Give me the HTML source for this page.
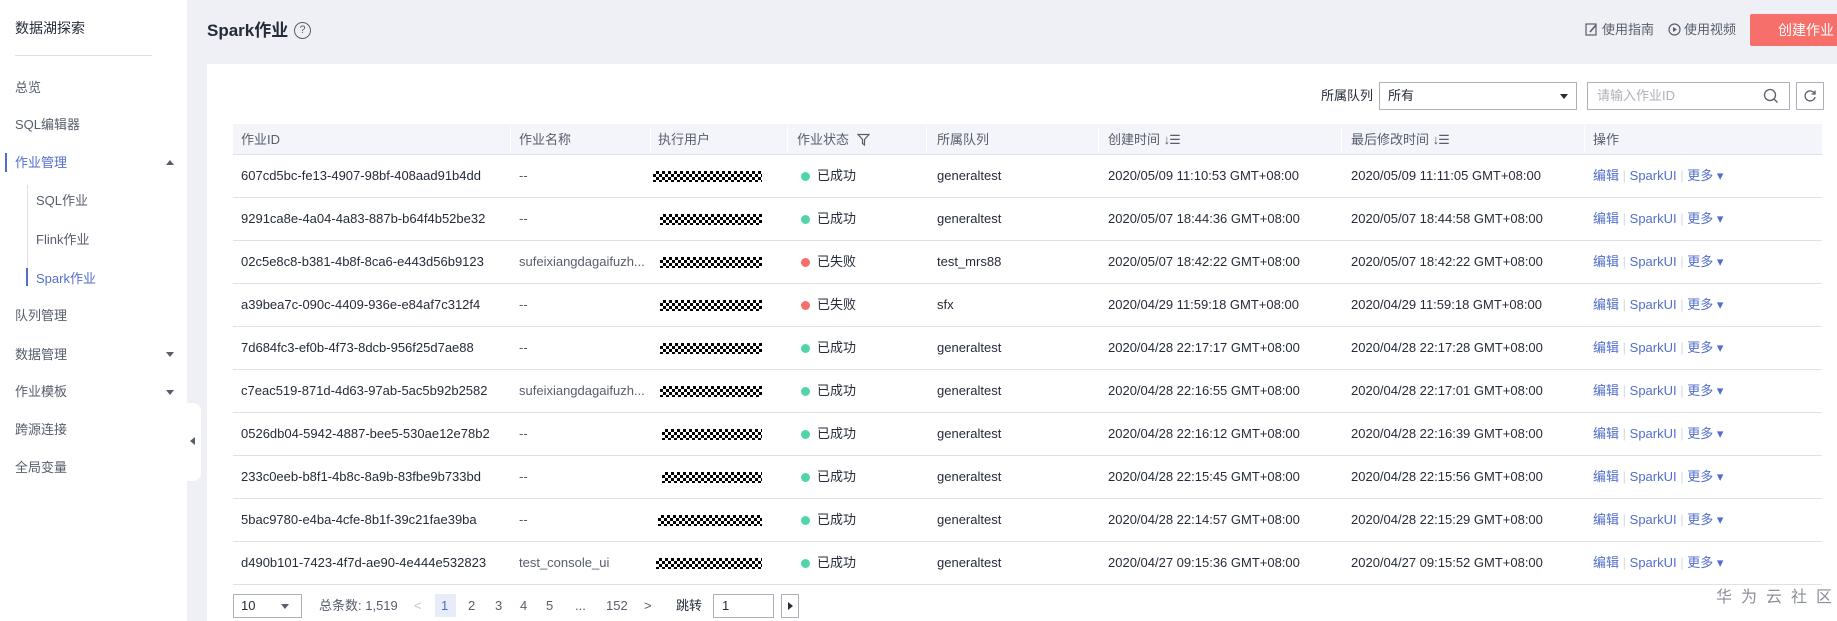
<!DOCTYPE html>
<html><head><meta charset="utf-8"><style>
*{margin:0;padding:0;box-sizing:border-box}
body{width:1837px;height:621px;overflow:hidden;background:#fff;font-family:"Liberation Sans","Noto Sans CJK SC",sans-serif;color:#252b3a;position:relative;line-height:16px}
.a{position:absolute;white-space:nowrap}
.sb{font-size:13px;color:#575d6c}
.tri{width:0;height:0;border-left:4px solid transparent;border-right:4px solid transparent;border-top:5px solid #575d6c}
.triu{width:0;height:0;border-left:4px solid transparent;border-right:4px solid transparent;border-bottom:5px solid #575d6c}
.row{position:absolute;left:233px;width:1589px;height:43px;border-bottom:1px solid #dfe1e6;font-size:13px;color:#252b3a}
.row span{position:absolute;top:13px;white-space:nowrap;line-height:16px}
.chk{position:absolute;top:16px;height:11px;background:repeating-conic-gradient(#000 0 25%,#fff 0 50%) 0 0/6px 6px}
.dot{position:absolute;top:17px;width:9px;height:9px;border-radius:50%}
.lk{color:#526ecc}
.sep{color:#d5d8de}
.th{font-size:13px;color:#575d6c;top:132px}
.pg{font-size:13px;color:#575d6c;top:598px}
</style></head><body>
<div class="a" style="left:15px;top:20px;font-size:14px;color:#252b3a">数据湖探索</div>
<div class="a" style="left:15px;top:55px;width:137px;height:1px;background:#dfe1e6"></div>
<div class="a sb" style="left:15px;top:80px">总览</div>
<div class="a sb" style="left:15px;top:117px">SQL编辑器</div>
<div class="a" style="left:5px;top:153px;width:2px;height:19px;background:#526ecc"></div>
<div class="a sb" style="left:15px;top:155px;color:#526ecc">作业管理</div>
<div class="a triu" style="left:166px;top:160px"></div>
<div class="a" style="left:27px;top:185px;width:1px;height:100px;background:#dfe1e6"></div>
<div class="a" style="left:26px;top:268px;width:2px;height:18px;background:#526ecc"></div>
<div class="a sb" style="left:36px;top:193px">SQL作业</div>
<div class="a sb" style="left:36px;top:232px">Flink作业</div>
<div class="a sb" style="left:36px;top:271px;color:#526ecc">Spark作业</div>
<div class="a sb" style="left:15px;top:308px">队列管理</div>
<div class="a sb" style="left:15px;top:347px">数据管理</div>
<div class="a tri" style="left:166px;top:352px"></div>
<div class="a sb" style="left:15px;top:384px">作业模板</div>
<div class="a tri" style="left:166px;top:390px"></div>
<div class="a sb" style="left:15px;top:422px">跨源连接</div>
<div class="a sb" style="left:15px;top:460px">全局变量</div>
<div class="a" style="left:187px;top:0;width:1650px;height:621px;background:#eef0f5"></div>
<div class="a" style="left:187px;top:403px;width:14px;height:78px;background:#fff;border-radius:0 8px 8px 0"></div>
<div class="a" style="left:190px;top:437px;width:0;height:0;border-top:4px solid transparent;border-bottom:4px solid transparent;border-right:5px solid #575d6c"></div>
<div class="a" style="left:207px;top:21px;font-size:17px;font-weight:bold;color:#252b3a;line-height:20px">Spark作业</div>
<div class="a" style="left:294px;top:22px;width:17px;height:17px;border:1.3px solid #575d6c;border-radius:50%;font-size:11px;text-align:center;line-height:15px;color:#575d6c">?</div>
<svg class="a" style="left:1585px;top:23px" width="13" height="13" viewBox="0 0 13 13"><rect x="1" y="1" width="10" height="11" fill="none" stroke="#575d6c" stroke-width="1.2"/><path d="M5 9 L11 2" stroke="#575d6c" stroke-width="1.6"/></svg>
<div class="a" style="left:1602px;top:22px;font-size:13px;color:#575d6c">使用指南</div>
<svg class="a" style="left:1668px;top:23px" width="13" height="13" viewBox="0 0 13 13"><circle cx="6.5" cy="6.5" r="5.5" fill="none" stroke="#575d6c" stroke-width="1.2"/><path d="M5 4 L9 6.5 L5 9Z" fill="#575d6c"/></svg>
<div class="a" style="left:1684px;top:22px;font-size:13px;color:#575d6c">使用视频</div>
<div class="a" style="left:1750px;top:14px;width:100px;height:32px;background:#f66f6a;border-radius:2px;color:#fff;font-size:14px;line-height:32px;padding-left:28px">创建作业</div>
<div class="a" style="left:207px;top:64px;width:1630px;height:557px;background:#fff"></div>
<div class="a" style="left:1321px;top:88px;font-size:13px;color:#252b3a">所属队列</div>
<div class="a" style="left:1379px;top:82px;width:198px;height:28px;border:1px solid #adb0b8"></div>
<div class="a" style="left:1388px;top:88px;font-size:13px">所有</div>
<div class="a tri" style="left:1560px;top:94px;border-top-color:#252b3a"></div>
<div class="a" style="left:1587px;top:82px;width:203px;height:28px;border:1px solid #adb0b8"></div>
<div class="a" style="left:1597px;top:88px;font-size:13px;color:#adb0b8">请输入作业ID</div>
<svg class="a" style="left:1763px;top:88px" width="16" height="16" viewBox="0 0 16 16"><circle cx="7" cy="7" r="5.5" fill="none" stroke="#575d6c" stroke-width="1.3"/><path d="M11 11 L14.5 14.5" stroke="#575d6c" stroke-width="1.3"/></svg>
<div class="a" style="left:1796px;top:82px;width:28px;height:28px;border:1px solid #adb0b8"></div>
<svg class="a" style="left:1803px;top:89px" width="14" height="14" viewBox="0 0 14 14"><path d="M11.5 4.5 A5 5 0 1 0 12 8" fill="none" stroke="#575d6c" stroke-width="1.3"/><path d="M12 1.5 V5 H8.5" fill="none" stroke="#575d6c" stroke-width="1.3"/></svg>
<div class="a" style="left:233px;top:124px;width:1589px;height:31px;background:#f3f5fa;border-bottom:1px solid #dfe1e6"></div>
<div class="a" style="left:510px;top:126px;width:1px;height:27px;background:#fff"></div>
<div class="a" style="left:650px;top:126px;width:1px;height:27px;background:#fff"></div>
<div class="a" style="left:787px;top:126px;width:1px;height:27px;background:#fff"></div>
<div class="a" style="left:926px;top:126px;width:1px;height:27px;background:#fff"></div>
<div class="a" style="left:1098px;top:126px;width:1px;height:27px;background:#fff"></div>
<div class="a" style="left:1341px;top:126px;width:1px;height:27px;background:#fff"></div>
<div class="a" style="left:1584px;top:126px;width:1px;height:27px;background:#fff"></div>
<div class="a th" style="left:241px">作业ID</div>
<div class="a th" style="left:519px">作业名称</div>
<div class="a th" style="left:658px">执行用户</div>
<div class="a th" style="left:797px">作业状态</div>
<svg class="a" style="left:857px;top:133px" width="13" height="13" viewBox="0 0 13 13"><path d="M1 1.5 H12 L7.5 6.5 V12 L5.5 10.5 V6.5 Z" fill="none" stroke="#575d6c" stroke-width="1.2"/></svg>
<div class="a th" style="left:937px">所属队列</div>
<div class="a th" style="left:1108px">创建时间 <span style="letter-spacing:-1px">↓☰</span></div>
<div class="a th" style="left:1351px">最后修改时间 <span style="letter-spacing:-1px">↓☰</span></div>
<div class="a th" style="left:1593px">操作</div>
<div id="rows"></div>
<div class="a" style="left:233px;top:594px;width:69px;height:24px;border:1px solid #adb0b8"></div>
<div class="a pg" style="left:241px;color:#252b3a">10</div>
<div class="a tri" style="left:281px;top:604px;border-top-color:#575d6c"></div>
<div class="a pg" style="left:319px">总条数: 1,519</div>
<div class="a pg" style="left:414px;color:#c0c4cc">&lt;</div>
<div class="a" style="left:435px;top:594px;width:21px;height:23px;background:#e8ecf8"></div>
<div class="a pg" style="left:441px;color:#526ecc">1</div>
<div class="a pg" style="left:468px">2</div>
<div class="a pg" style="left:495px">3</div>
<div class="a pg" style="left:520px">4</div>
<div class="a pg" style="left:546px">5</div>
<div class="a pg" style="left:575px">...</div>
<div class="a pg" style="left:606px">152</div>
<div class="a pg" style="left:644px">&gt;</div>
<div class="a pg" style="left:676px;color:#252b3a">跳转</div>
<div class="a" style="left:713px;top:594px;width:61px;height:24px;border:1px solid #adb0b8"></div>
<div class="a pg" style="left:722px;color:#252b3a">1</div>
<div class="a" style="left:781px;top:594px;width:18px;height:24px;border:1px solid #adb0b8"></div>
<div class="a" style="left:788px;top:602px;width:0;height:0;border-top:4px solid transparent;border-bottom:4px solid transparent;border-left:5px solid #252b3a"></div>
<div class="a" style="left:1716px;top:590px;font-size:16px;color:#8a8e99;letter-spacing:9px">华为云社区</div>
<script>
var d=[["607cd5bc-fe13-4907-98bf-408aad91b4dd","--",653,1,"generaltest","2020/05/09 11:10:53","2020/05/09 11:11:05"],
["9291ca8e-4a04-4a83-887b-b64f4b52be32","--",660,1,"generaltest","2020/05/07 18:44:36","2020/05/07 18:44:58"],
["02c5e8c8-b381-4b8f-8ca6-e443d56b9123","sufeixiangdagaifuzh...",660,0,"test_mrs88","2020/05/07 18:42:22","2020/05/07 18:42:22"],
["a39bea7c-090c-4409-936e-e84af7c312f4","--",660,0,"sfx","2020/04/29 11:59:18","2020/04/29 11:59:18"],
["7d684fc3-ef0b-4f73-8dcb-956f25d7ae88","--",660,1,"generaltest","2020/04/28 22:17:17","2020/04/28 22:17:28"],
["c7eac519-871d-4d63-97ab-5ac5b92b2582","sufeixiangdagaifuzh...",660,1,"generaltest","2020/04/28 22:16:55","2020/04/28 22:17:01"],
["0526db04-5942-4887-bee5-530ae12e78b2","--",662,1,"generaltest","2020/04/28 22:16:12","2020/04/28 22:16:39"],
["233c0eeb-b8f1-4b8c-8a9b-83fbe9b733bd","--",662,1,"generaltest","2020/04/28 22:15:45","2020/04/28 22:15:56"],
["5bac9780-e4ba-4cfe-8b1f-39c21fae39ba","--",658,1,"generaltest","2020/04/28 22:14:57","2020/04/28 22:15:29"],
["d490b101-7423-4f7d-ae90-4e444e532823","test_console_ui",656,1,"generaltest","2020/04/27 09:15:36","2020/04/27 09:15:52"]];
var h="";
d.forEach(function(r,i){
h+='<div class="row" style="top:'+(155+i*43)+'px">'+
'<span style="left:8px">'+r[0]+'</span>'+
'<span style="left:286px;color:#575d6c">'+r[1]+'</span>'+
'<div class="chk" style="left:'+(r[2]-233)+'px;width:'+(762-r[2])+'px"></div>'+
'<div class="dot" style="left:568px;background:'+(r[3]?'#50d4ab':'#f66f6a')+'"></div>'+
'<span style="left:584px">'+(r[3]?'已成功':'已失败')+'</span>'+
'<span style="left:704px">'+r[4]+'</span>'+
'<span style="left:875px">'+r[5]+' GMT+08:00</span>'+
'<span style="left:1118px">'+r[6]+' GMT+08:00</span>'+
'<span style="left:1360px"><a class="lk">编辑</a> <a class="sep">|</a> <a class="lk">SparkUI</a> <a class="sep">|</a> <a class="lk">更多 ▾</a></span>'+
'</div>';});
document.getElementById("rows").innerHTML=h;
</script>
</body></html>
